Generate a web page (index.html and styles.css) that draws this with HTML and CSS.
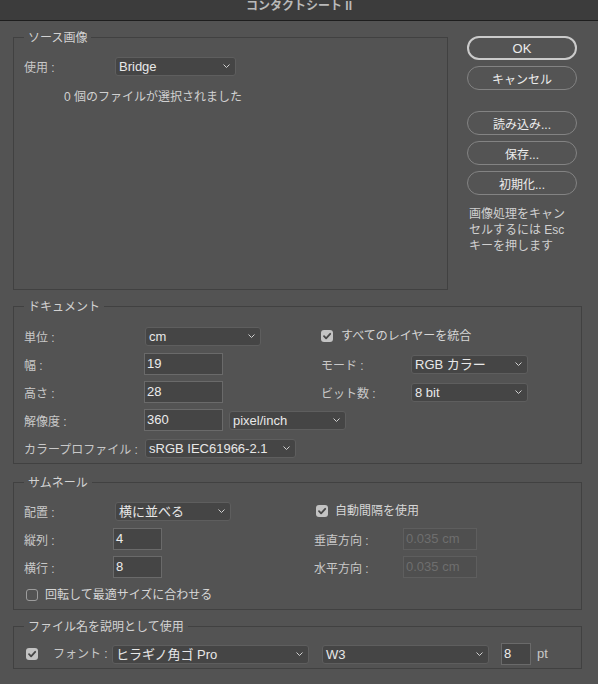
FILE: index.html
```html
<!DOCTYPE html>
<html lang="ja">
<head>
<meta charset="utf-8">
<title>コンタクトシート II</title>
<link rel="stylesheet" href="styles.css">
</head>
<body>
<div class="titlebar">コンタクトシート II</div>
<div class="content">
  <div class="top">
    <fieldset class="group source">
      <legend>ソース画像</legend>
      <div class="src-body">
        <div class="src-row">
          <span class="label">使用 :</span>
          <div class="select w121"><span>Bridge</span><svg class="chev" width="7" height="4" viewBox="0 0 7 4"><path d="M0.5 0.5 L3.5 3.5 L6.5 0.5" fill="none" stroke="#d0d0d0" stroke-width="1"/></svg></div>
        </div>
        <div class="msg">0 個のファイルが選択されました</div>
      </div>
    </fieldset>
    <div class="buttons">
      <button class="btn primary">OK</button>
      <button class="btn">キャンセル</button>
      <button class="btn gap">読み込み...</button>
      <button class="btn">保存...</button>
      <button class="btn">初期化...</button>
      <p class="hint">画像処理をキャン<br>セルするには Esc<br>キーを押します</p>
    </div>
  </div>

  <fieldset class="group wide doc">
    <legend>ドキュメント</legend>
    <div class="doc-grid">
      <span class="label">単位 :</span>
      <div class="select w116"><span>cm</span><svg class="chev" width="7" height="4" viewBox="0 0 7 4"><path d="M0.5 0.5 L3.5 3.5 L6.5 0.5" fill="none" stroke="#d0d0d0" stroke-width="1"/></svg></div>
      <label class="check span2 doc-cb"><span class="cb checked"><svg width="12" height="12" viewBox="0 0 12 12"><path d="M3 6.2 L5.1 8.3 L9.2 3.8" fill="none" stroke="#474747" stroke-width="1.8" stroke-linecap="round" stroke-linejoin="round"/></svg></span><span class="cb-text">すべてのレイヤーを統合</span></label>

      <span class="label">幅 :</span>
      <div class="input w79">19</div>
      <span class="label">モード :</span>
      <div class="select w117"><span>RGB カラー</span><svg class="chev" width="7" height="4" viewBox="0 0 7 4"><path d="M0.5 0.5 L3.5 3.5 L6.5 0.5" fill="none" stroke="#d0d0d0" stroke-width="1"/></svg></div>

      <span class="label">高さ :</span>
      <div class="input w79">28</div>
      <span class="label">ビット数 :</span>
      <div class="select w117"><span>8 bit</span><svg class="chev" width="7" height="4" viewBox="0 0 7 4"><path d="M0.5 0.5 L3.5 3.5 L6.5 0.5" fill="none" stroke="#d0d0d0" stroke-width="1"/></svg></div>

      <span class="label">解像度 :</span>
      <div class="pair span3">
        <div class="input w79">360</div>
        <div class="select w117 res"><span>pixel/inch</span><svg class="chev" width="7" height="4" viewBox="0 0 7 4"><path d="M0.5 0.5 L3.5 3.5 L6.5 0.5" fill="none" stroke="#d0d0d0" stroke-width="1"/></svg></div>
      </div>

      <span class="label">カラープロファイル :</span>
      <div class="select w151 span3"><span>sRGB IEC61966-2.1</span><svg class="chev" width="7" height="4" viewBox="0 0 7 4"><path d="M0.5 0.5 L3.5 3.5 L6.5 0.5" fill="none" stroke="#d0d0d0" stroke-width="1"/></svg></div>
    </div>
  </fieldset>

  <fieldset class="group wide thumb">
    <legend>サムネール</legend>
    <div class="thumb-grid">
      <span class="label">配置 :</span>
      <div class="select w116"><span>横に並べる</span><svg class="chev" width="7" height="4" viewBox="0 0 7 4"><path d="M0.5 0.5 L3.5 3.5 L6.5 0.5" fill="none" stroke="#d0d0d0" stroke-width="1"/></svg></div>
      <label class="check span2 thumb-cb"><span class="cb checked"><svg width="12" height="12" viewBox="0 0 12 12"><path d="M3 6.2 L5.1 8.3 L9.2 3.8" fill="none" stroke="#474747" stroke-width="1.8" stroke-linecap="round" stroke-linejoin="round"/></svg></span><span class="cb-text">自動間隔を使用</span></label>

      <span class="label">縦列 :</span>
      <div class="input w49">4</div>
      <span class="label">垂直方向 :</span>
      <div class="input w74 disabled">0.035 cm</div>

      <span class="label">横行 :</span>
      <div class="input w49">8</div>
      <span class="label">水平方向 :</span>
      <div class="input w74 disabled">0.035 cm</div>

      <label class="check span4 rotate-cb"><span class="cb"></span><span class="cb-text">回転して最適サイズに合わせる</span></label>
    </div>
  </fieldset>

  <fieldset class="group wide fname">
    <legend>ファイル名を説明として使用</legend>
    <div class="fn-row">
      <span class="cb checked fn-cb"><svg width="12" height="12" viewBox="0 0 12 12"><path d="M3 6.2 L5.1 8.3 L9.2 3.8" fill="none" stroke="#474747" stroke-width="1.8" stroke-linecap="round" stroke-linejoin="round"/></svg></span>
      <span class="label fn-label">フォント :</span>
      <div class="select w197"><span>ヒラギノ角ゴ Pro</span><svg class="chev" width="7" height="4" viewBox="0 0 7 4"><path d="M0.5 0.5 L3.5 3.5 L6.5 0.5" fill="none" stroke="#d0d0d0" stroke-width="1"/></svg></div>
      <div class="select w167 fn-weight"><span>W3</span><svg class="chev" width="7" height="4" viewBox="0 0 7 4"><path d="M0.5 0.5 L3.5 3.5 L6.5 0.5" fill="none" stroke="#d0d0d0" stroke-width="1"/></svg></div>
      <div class="input w30 fn-size">8</div>
      <span class="label fn-unit">pt</span>
    </div>
  </fieldset>
</div>
</body>
</html>
```

FILE: styles.css
```css
* { box-sizing: border-box; }
html, body { margin: 0; padding: 0; }
body {
  background: #535353;
  font-family: "Liberation Sans", "Noto Sans CJK JP", sans-serif;
  font-size: 12px;
  color: #c8c8c8;
  width: 598px;
  height: 684px;
  overflow: hidden;
}
.titlebar {
  height: 21px;
  background: #3c3c3c;
  border-bottom: 1px solid #1e1e1e;
  text-align: center;
  font-size: 12px;
  font-weight: bold;
  line-height: 13px;
  color: #b9b9b9;
}
.content { padding: 8px 0 0 13px; }
.top { display: flex; align-items: flex-start; }

fieldset.group {
  margin: 0;
  padding: 0;
  border: 1px solid #414141;
  min-width: 0;
}
fieldset.group legend {
  margin-left: 10px;
  padding: 2px 4px 0 4px;
  font-size: 12px;
  line-height: 14px;
  color: #d2d2d2;
}
.source { width: 435px; }
.src-body { height: 244px; padding: 7px 0 0 10px; }
.src-row {
  display: grid;
  grid-template-columns: 89px 123px;
  height: 28px;
  align-items: center;
}
.msg { margin: 9px 0 0 40px; line-height: 16px; color: #d0d0d0; }

.buttons {
  margin-left: 19px;
  margin-top: 7px;
  width: 110px;
  display: flex;
  flex-direction: column;
}
.btn {
  height: 24px;
  border-radius: 12px;
  border: 1px solid #838383;
  background: #545454;
  color: #ececec;
  font-family: "Liberation Sans", "Noto Sans CJK JP", sans-serif;
  font-size: 12px;
  padding: 0;
  margin: 0 0 6px 0;
}
.btn.primary { border: 2px solid #cbcbcb; font-size: 13px; }
.btn.gap { margin-top: 15px; }
.hint {
  margin: 5px 0 0 2px;
  line-height: 16px;
  color: #d0d0d0;
}

fieldset.wide { width: 569px; }
fieldset.doc { margin-top: 8px; }
fieldset.thumb { margin-top: 10px; }
fieldset.fname { margin-top: 8px; }

.doc-grid {
  display: grid;
  grid-template-columns: 120px 177px 89px 117px;
  grid-auto-rows: 28px;
  align-items: center;
  padding: 8px 0 1px 10px;
}
.thumb-grid {
  display: grid;
  grid-template-columns: 89px 201px 89px 75px;
  grid-auto-rows: 28px;
  align-items: center;
  padding: 7px 0 0 10px;
}
.span2 { grid-column: span 2; }
.span3 { grid-column: span 3; }
.span4 { grid-column: span 4; }

.label {
  padding-top: 4px;
  line-height: 14px;
  white-space: nowrap;
  color: #c8c8c8;
}

.select {
  height: 19px;
  margin-left: 2px;
  background: #454545;
  border: 1px solid #5e5e5e;
  border-radius: 3px;
  display: flex;
  align-items: center;
  justify-content: space-between;
  padding: 0 5px 0 3px;
  font-size: 13px;
  color: #e8e8e8;
  white-space: nowrap;
}
.select span { line-height: 17px; }
.chev { flex: none; }
.doc-grid .select { margin-left: 1px; }
.doc-grid .res { margin-left: 6px; }

.input {
  height: 22px;
  background: #454545;
  border: 1px solid #6a6a6a;
  padding: 0 2px;
  font-size: 13px;
  line-height: 20px;
  color: #ececec;
  white-space: nowrap;
}
.input.disabled {
  background: #4f4f4f;
  border-color: #5e5e5e;
  color: #6e6e6e;
}
.pair { display: flex; align-items: center; }

.w30 { width: 30px; }
.w49 { width: 49px; }
.w74 { width: 74px; }
.w79 { width: 79px; }
.w116 { width: 116px; }
.w117 { width: 117px; }
.w121 { width: 121px; }
.w151 { width: 151px; }
.w167 { width: 167px; }
.w197 { width: 197px; }

.check { display: flex; align-items: center; }
.cb {
  flex: none;
  width: 12px;
  height: 12px;
  border-radius: 3px;
  border: 1px solid #9c9c9c;
  display: block;
}
.cb svg { display: block; }
.cb.checked { background: #c3c3c3; border: none; }
.cb-text { line-height: 14px; color: #d6d6d6; }
.doc-cb .cb-text { margin-left: 8px; }
.thumb-cb { margin-left: 2px; }
.thumb-cb .cb-text { margin-left: 7px; }
.rotate-cb { margin-left: 2px; }
.rotate-cb .cb-text { margin-left: 7px; }

.fn-row {
  display: flex;
  align-items: center;
  height: 28px;
  padding: 0 0 0 10px;
  margin-top: 6px;
}
.fn-cb { margin-left: 2px; }
.fn-label { width: 59px; margin-left: 15px; padding-top: 0; }
.fn-row .select { margin-left: 0; }
.fn-row .fn-weight { margin-left: 13px; }
.fn-size { margin-left: 12px; }
.fn-unit { margin-left: 6px; padding-top: 0; font-size: 13px; }
```
